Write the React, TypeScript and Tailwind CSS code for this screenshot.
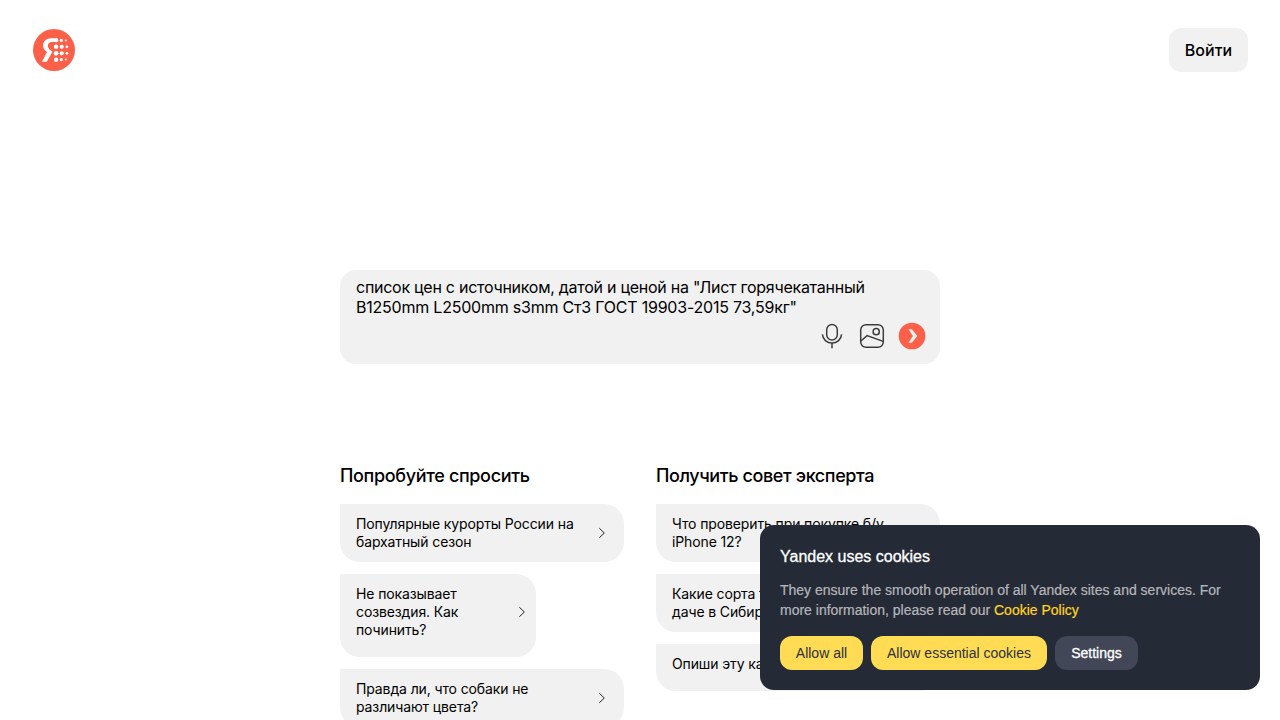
import React from "react";

function Logo() {
  return (
    <svg width="42" height="42" viewBox="0 0 42 42" aria-hidden="true">
      <circle cx="21" cy="21" r="21" fill="#fc6049" />
      <path
        d="M24.500 9.300h-6.100c-5.200 0-8.300 2.900-8.300 7.100 0 3 1.400 4.900 3.900 6.500L8.900 32.700h4.900l5.700-10.200-1.600-1.100c-2-1.400-3-2.700-3-4.700 0-2.400 1.400-3.800 3.900-3.800h5.700z"
        fill="#fff"
      />
      <g fill="#fff">
        <circle cx="23.200" cy="11.300" r="2" />
        <circle cx="23.100" cy="17.800" r="2.300" />
        <circle cx="23.100" cy="24.300" r="2.400" />
        <circle cx="23.100" cy="30.700" r="2.200" />
        <circle cx="28.300" cy="11.400" r="1.600" />
        <circle cx="28.700" cy="17.800" r="2.100" />
        <circle cx="28.700" cy="24.300" r="2.100" />
        <circle cx="28.300" cy="30.600" r="1.600" />
        <circle cx="32.800" cy="11.500" r="1" />
        <circle cx="33.900" cy="17.800" r="1.400" />
        <circle cx="33.900" cy="24.300" r="1.400" />
        <circle cx="32.800" cy="30.500" r="1" />
      </g>
    </svg>
  );
}

function MicIcon() {
  return (
    <svg width="24" height="28" viewBox="0 0 24 28" fill="none" stroke="#3d3d3d" strokeWidth="1.5">
      <rect x="6.700" y="2.500" width="10.600" height="15.600" rx="5.300" />
      <path d="M2.400 12.400c.4 5.100 4.500 8.600 9.600 8.600s9.200-3.500 9.600-8.600M12 21v5.200" />
    </svg>
  );
}

function PictureIcon() {
  return (
    <svg width="26" height="26" viewBox="0 0 26 26" fill="none" stroke="#3d3d3d" strokeWidth="1.500">
      <rect x="1.700" y="1.700" width="22.600" height="22.600" rx="5.200" />
      <circle cx="17.200" cy="8.700" r="3.100" />
      <path d="m1.900 18 6.200-5.400 16 5.800" />
    </svg>
  );
}

function SendIcon() {
  return (
    <svg width="28" height="28" viewBox="0 0 28 28">
      <circle cx="14" cy="14" r="13.300" fill="#fc6049" />
      <path d="M10.400 7.200h3.400l5.600 6.800-5.600 6.800h-3.400l4.500-6.800z" fill="#f1f1f1" />
    </svg>
  );
}

function Chevron() {
  return (
    <svg className="shrink-0" width="8" height="12" viewBox="0 0 8 12" fill="none" stroke="#222" strokeWidth="1">
      <path d="m1.300 1.200 5 4.800-5 4.800" />
    </svg>
  );
}

type CardProps = { lines: string[]; size: string; chevron?: string };

function Card({ lines, size, chevron = "pr-[18px]" }: CardProps) {
  return (
    <button
      className={`flex items-start justify-between rounded-[20px] rounded-tl-none bg-[#f1f1f1] pt-[11px] pl-4 text-left text-[14px] leading-[18px] tracking-[-0.12px] text-black ${size} ${chevron}`}
    >
      <span className="whitespace-nowrap">
        {lines.map((line) => (
          <span key={line} className="block">
            {line}
          </span>
        ))}
      </span>
      <span className={`flex items-center ${lines.length === 3 ? "h-[54px]" : lines.length === 2 ? "h-9" : "h-[18px]"}`}>
        <Chevron />
      </span>
    </button>
  );
}

function CookieNotice() {
  return (
    <aside className="fixed right-5 bottom-[30px] h-[165px] w-[500px] rounded-[14px] bg-[#252a37] px-5 pt-[22px] font-['Liberation_Sans',Arial,sans-serif]">
      <h2 className="text-[16px] leading-5 font-normal text-white [-webkit-text-stroke:0.3px_white]">Yandex uses cookies</h2>
      <p className="mt-[13px] text-[14px] leading-5 whitespace-nowrap text-[#b5b6ba] [-webkit-text-stroke:0.2px_#b5b6ba]">
        They ensure the smooth operation of all Yandex sites and services. For
        <br />
        more information, please read our{" "}
        <a className="text-[#ffd426] [-webkit-text-stroke:0.2px_#ffd426]">Cookie Policy</a>
      </p>
      <div className="mt-4 flex gap-2 text-[14px] leading-[34px] whitespace-nowrap">
        <button className="h-[34px] w-[83px] rounded-xl bg-[#ffdc54] text-[#2c303b]">Allow all</button>
        <button className="h-[34px] w-44 rounded-xl bg-[#ffdc54] text-[#2c303b]">Allow essential cookies</button>
        <button className="h-[34px] w-[83px] rounded-xl bg-[#424757] text-white [-webkit-text-stroke:0.3px_white]">Settings</button>
      </div>
    </aside>
  );
}

export default function App() {
  return (
    <div className="h-[720px] overflow-hidden bg-white font-[Inter,sans-serif] text-black">
      <header className="flex h-[100px] items-center justify-between pr-8 pl-[33px]">
        <Logo />
        <button className="h-11 w-[79px] rounded-xl bg-[#f1f1f1] text-[16px] font-medium">Войти</button>
      </header>

      <main className="mx-auto mt-[170px] w-[600px]">
        <section className="flex h-[94px] flex-col rounded-[16px] bg-[#f1f1f1] pt-[7px] pr-[14px] pl-4">
          <div className="text-[16px] leading-5 whitespace-nowrap">
            <p className="tracking-[-0.265px]">список цен с источником, датой и ценой на "Лист горячекатанный</p>
            <p className="tracking-[-0.22px]">B1250mm L2500mm s3mm Ст3 ГОСТ 19903-2015 73,59кг"</p>
          </div>
          <div className="mt-[5px] flex h-7 items-center justify-end">
            <MicIcon />
            <span className="ml-[15px]">
              <PictureIcon />
            </span>
            <span className="ml-[13px]">
              <SendIcon />
            </span>
          </div>
        </section>

        <div className="mt-[100px] flex gap-8">
          <section className="w-[284px]">
            <h2 className="text-[18px] leading-6 font-medium tracking-[-0.34px] whitespace-nowrap">Попробуйте спросить</h2>
            <div className="mt-4 flex flex-col gap-3">
              <Card lines={["Популярные курорты России на", "бархатный сезон"]} size="h-[58px] w-[284px]" />
              <Card lines={["Не показывает", "созвездия. Как", "починить?"]} size="h-[83px] w-[196px]" chevron="pr-[10px]" />
              <Card lines={["Правда ли, что собаки не", "различают цвета?"]} size="h-[58px] w-[284px]" />
            </div>
          </section>
          <section className="w-[284px]">
            <h2 className="text-[18px] leading-6 font-medium tracking-[-0.39px] whitespace-nowrap">Получить совет эксперта</h2>
            <div className="mt-4 flex flex-col gap-3">
              <Card lines={["Что проверить при покупке б/у", "iPhone 12?"]} size="h-[58px] w-[284px]" />
              <Card lines={["Какие сорта т", "даче в Сибири"]} size="h-[58px] w-[284px]" />
              <Card lines={["Опиши эту ка"]} size="h-[47px] w-[284px]" />
            </div>
          </section>
        </div>
      </main>
      <CookieNotice />
    </div>
  );
}
